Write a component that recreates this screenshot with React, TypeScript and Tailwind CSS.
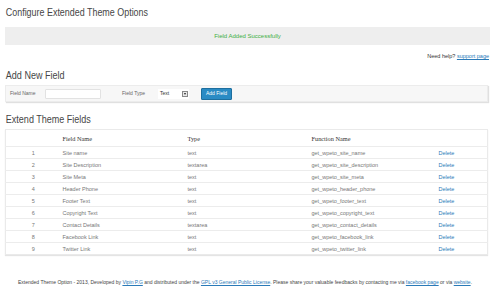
const rows = [
  ["Site name", "text", "get_wpeto_site_name"],
  ["Site Description", "textarea", "get_wpeto_site_description"],
  ["Site Meta", "text", "get_wpeto_site_meta"],
  ["Header Phone", "text", "get_wpeto_header_phone"],
  ["Footer Text", "text", "get_wpeto_footer_text"],
  ["Copyright Text", "text", "get_wpeto_copyright_text"],
  ["Contact Details", "textarea", "get_wpeto_contact_details"],
  ["Facebook Link", "text", "get_wpeto_facebook_link"],
  ["Twitter Link", "text", "get_wpeto_twitter_link"],
];

export default function App() {
  return (
    <div className="w-[495px] h-[293px] bg-white overflow-hidden font-['Liberation_Sans',sans-serif] text-[#555]">
      <div className="pl-[5px] pr-[5px] pt-[5px]">
        <h1 className="text-[11.3px] leading-[15px] text-[#464646] pl-[1px] origin-left scale-x-[0.79]">Configure Extended Theme Options</h1>

        <div className="mt-[7px] h-[18px] bg-[#eeeeee] flex items-center justify-center">
          <span className="text-[6px] text-[#3fae3f]">Field Added Successfully</span>
        </div>

        <div className="mt-[7px] flex justify-end pr-[1px] text-[5.5px] text-[#333]">
          <span>
            Need help? <a className="text-[#2a7ab8] underline">support page</a>
          </span>
        </div>

        <h2 className="mt-[9px] text-[11px] leading-[13px] text-[#464646] pl-[1px] origin-left scale-x-[0.82]">Add New Field</h2>

        <div className="mt-[3px] w-[483px] h-[17px] bg-[#f7f7f7] border border-[#ececec] shadow-[1px_1px_1px_#e0e0e0] flex items-center text-[5px] text-[#666]">
          <span className="ml-[4px] w-[35px]">Field Name</span>
          <div className="w-[56px] h-[10px] bg-white border border-[#e2e2e2] rounded-[1px]" />
          <span className="ml-[21px] w-[36px]">Field Type</span>
          <div className="w-[31px] h-[10px] bg-white flex items-center pl-[2px] text-[#333]">
            <span className="flex-1">Text</span>
            <div className="w-[6px] h-[6px] border border-[#888] bg-[#e8e8e8] mr-[1px] flex items-center justify-center">
              <div className="w-0 h-0 border-l-[1.5px] border-r-[1.5px] border-t-[2px] border-l-transparent border-r-transparent border-t-[#222]" />
            </div>
          </div>
          <button className="ml-[12px] w-[31px] h-[12px] bg-[#2a8bc4] border border-[#1e6f9f] rounded-[1px] text-white text-[5px]">
            Add Field
          </button>
        </div>

        <h2 className="mt-[11px] text-[11px] leading-[13px] text-[#464646] pl-[1px] origin-left scale-x-[0.82]">Extend Theme Fields</h2>

        <table className="mt-[3px] w-[483px] border border-[#eaeaea] shadow-[0_1px_1px_#e4e4e4] border-collapse text-[5.5px] text-[#777]">
          <thead>
            <tr className="h-[17px] border-b border-[#ececec] text-[6.3px] text-[#333] font-['Liberation_Serif',serif] text-left">
              <th className="w-[57px] font-normal"></th>
              <th className="w-[125px] font-normal">Field Name</th>
              <th className="w-[124px] font-normal">Type</th>
              <th className="w-[126px] font-normal">Function Name</th>
              <th className="font-normal"></th>
            </tr>
          </thead>
          <tbody>
            {rows.map((r, i) => (
              <tr key={i} className="h-[12px] border-b border-[#ececec] last:border-b-0">
                <td className="text-center pr-[2px]">{i + 1}</td>
                <td>{r[0]}</td>
                <td>{r[1]}</td>
                <td>{r[2]}</td>
                <td className="text-[#2a7ab8] pl-[1px]">Delete</td>
              </tr>
            ))}
          </tbody>
        </table>

        <div className="mt-[24px] pl-[13px] text-[5px] text-[#444] whitespace-nowrap">
          Extended Theme Option - 2013, Developed by <a className="text-[#2a7ab8] underline">Vipin P.G</a> and distributed under the{" "}
          <a className="text-[#2a7ab8] underline">GPL v3 General Public License</a>. Please share your valuable feedbacks by contacting me via{" "}
          <a className="text-[#2a7ab8] underline">facebook page</a> or via <a className="text-[#2a7ab8] underline">website</a>.
        </div>
      </div>
    </div>
  );
}
